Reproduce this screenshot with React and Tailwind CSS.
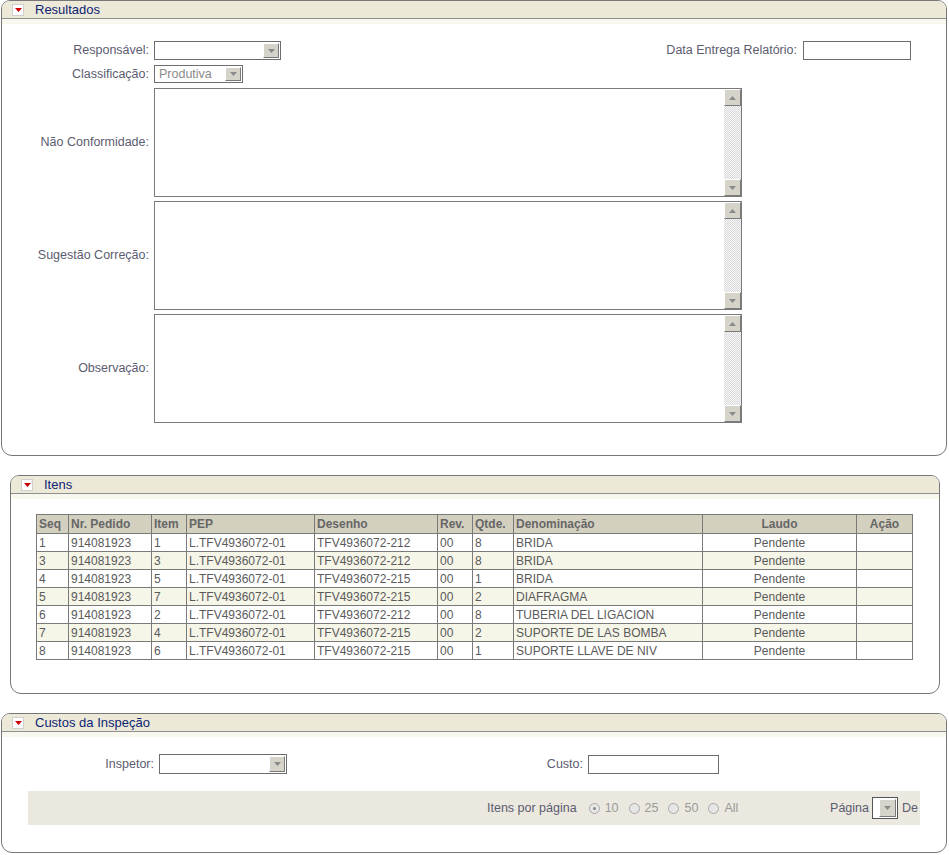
const FONT = "font-['Liberation_Sans',Arial,sans-serif]";

function Arrow({ up }) {
  return (
    <svg width="7" height="4" viewBox="0 0 7 4">
      <path d={up ? 'M0 4 L3.5 0 L7 4 Z' : 'M0 0 L7 0 L3.5 4 Z'} fill="#8a8a8a" />
    </svg>
  );
}

function RaisedButton({ up, className = '' }) {
  return (
    <div
      className={`flex items-center justify-center bg-[#d6d3ca] border border-t-white border-l-white border-r-[#7a7a7a] border-b-[#7a7a7a] ${className}`}
    >
      <Arrow up={up} />
    </div>
  );
}

function Toggle() {
  return (
    <div className="w-[12px] h-[12px] bg-white border border-[#d0d0d0] flex items-center justify-center">
      <svg width="7" height="4" viewBox="0 0 7 4">
        <path d="M0 0 L7 0 L3.5 4 Z" fill="#cc0000" />
      </svg>
    </div>
  );
}

function Panel({ title, className = '', children }) {
  return (
    <div className={`border border-[#777] rounded-t-[9px] rounded-b-[11px] overflow-hidden bg-white ${className}`}>
      <div className="h-[18px] bg-[#ece9d8] border-b border-[#8f8f8f] flex items-center">
        <div className="pl-[10px]">
          <Toggle />
        </div>
        <span className="ml-[11px] text-[13px] text-[#0c2472]">{title}</span>
      </div>
      <div className="h-[5px] bg-[#f8f8ee]" />
      {children}
    </div>
  );
}

function Select({ w, h = 'h-[19px]', value }) {
  return (
    <div className={`${w} ${h} flex border border-[#6d6d6d] bg-white`}>
      <div className="flex-1 pl-[4px] text-[12.5px] text-[#8a8a8a] leading-[16px] overflow-hidden whitespace-nowrap">
        {value}
      </div>
      <RaisedButton className="w-[16px] m-px" />
    </div>
  );
}

function Input({ w }) {
  return <div className={`${w} h-[19px] border border-[#6d6d6d] bg-white`} />;
}

function TextArea() {
  return (
    <div className="w-[588px] h-[109px] border border-[#7a7a7a] bg-white flex">
      <div className="flex-1" />
      <div className="w-[17px] flex flex-col">
        <RaisedButton up className="h-[17px]" />
        <div className="flex-1 bg-[repeating-conic-gradient(#d9d9d9_0_25%,#f8f8f8_0_50%)] bg-[length:2px_2px]" />
        <RaisedButton className="h-[17px]" />
      </div>
    </div>
  );
}

const label = 'text-[12.5px] leading-[15px] text-[#5c5c70] whitespace-nowrap';

const cols = [
  { name: 'Seq', w: 'w-[32px]' },
  { name: 'Nr. Pedido', w: 'w-[83px]' },
  { name: 'Item', w: 'w-[35px]' },
  { name: 'PEP', w: 'w-[128px]' },
  { name: 'Desenho', w: 'w-[123px]' },
  { name: 'Rev.', w: 'w-[35px]' },
  { name: 'Qtde.', w: 'w-[41px]' },
  { name: 'Denominação', w: 'w-[189px]' },
  { name: 'Laudo', w: 'w-[154px]', center: true },
  { name: 'Ação', w: 'w-[56px]', center: true },
];

const rows = [
  ['1', '914081923', '1', 'L.TFV4936072-01', 'TFV4936072-212', '00', '8', 'BRIDA', 'Pendente', ''],
  ['3', '914081923', '3', 'L.TFV4936072-01', 'TFV4936072-212', '00', '8', 'BRIDA', 'Pendente', ''],
  ['4', '914081923', '5', 'L.TFV4936072-01', 'TFV4936072-215', '00', '1', 'BRIDA', 'Pendente', ''],
  ['5', '914081923', '7', 'L.TFV4936072-01', 'TFV4936072-215', '00', '2', 'DIAFRAGMA', 'Pendente', ''],
  ['6', '914081923', '2', 'L.TFV4936072-01', 'TFV4936072-212', '00', '8', 'TUBERIA DEL LIGACION', 'Pendente', ''],
  ['7', '914081923', '4', 'L.TFV4936072-01', 'TFV4936072-215', '00', '2', 'SUPORTE DE LAS BOMBA', 'Pendente', ''],
  ['8', '914081923', '6', 'L.TFV4936072-01', 'TFV4936072-215', '00', '1', 'SUPORTE LLAVE DE NIV', 'Pendente', ''],
];

function Radio({ checked, text, className = '' }) {
  return (
    <div className={`flex items-center ${className}`}>
      <div className="w-[11px] h-[11px] rounded-full border border-[#a8a8a8] bg-[#e6e6e6] flex items-center justify-center">
        {checked && <div className="w-[3px] h-[3px] rounded-full bg-[#8a8a8a]" />}
      </div>
      <span className="ml-[5px] text-[12.5px] text-[#9a9a9a]">{text}</span>
    </div>
  );
}

export default function App() {
  return (
    <div className={`${FONT} w-[949px] bg-white pb-px`}>
      <Panel title="Resultados" className="ml-[1px] w-[946px]">
        <div className="pt-[17px] pb-[32px] pr-[35px]">
          <div className="flex items-center justify-between h-[19px]">
            <div className="flex items-center">
              <div className={`${label} w-[147px] text-right`}>Responsável:</div>
              <div className="ml-[5px]">
                <Select w="w-[127px]" value="" />
              </div>
            </div>
            <div className="flex items-center">
              <div className={label}>Data Entrega Relatório:</div>
              <div className="ml-[6px]">
                <Input w="w-[108px]" />
              </div>
            </div>
          </div>
          <div className="flex items-center mt-[5px]">
            <div className={`${label} w-[147px] text-right`}>Classificação:</div>
            <div className="ml-[5px]">
              <Select w="w-[89px]" h="h-[18px]" value="Produtiva" />
            </div>
          </div>
          {['Não Conformidade:', 'Sugestão Correção:', 'Observação:'].map((t, i) => (
            <div key={t} className={`flex items-center ${i === 0 ? 'mt-[5px]' : 'mt-[4px]'}`}>
              <div className={`${label} w-[147px] text-right`}>{t}</div>
              <div className="ml-[5px]">
                <TextArea />
              </div>
            </div>
          ))}
        </div>
      </Panel>

      <Panel title="Itens" className="ml-[10px] mt-[19px] w-[930px]">
        <div className="pt-[15px] pb-[33px] pl-[25px]">
          <table className="border-collapse w-[876px] table-fixed text-[12px]">
            <thead>
              <tr className="h-[19px] bg-[#d4d0c0]">
                {cols.map((c) => (
                  <th
                    key={c.name}
                    className={`${c.w} border border-[#7a7a7a] px-[2px] font-bold text-[#666] ${c.center ? 'text-center' : 'text-left'}`}
                  >
                    {c.name}
                  </th>
                ))}
              </tr>
            </thead>
            <tbody>
              {rows.map((r, i) => (
                <tr key={i} className={`h-[18px] ${i % 2 ? 'bg-[#f5f5e8]' : 'bg-white'}`}>
                  {r.map((v, j) => (
                    <td
                      key={j}
                      className={`border border-[#7a7a7a] px-[2px] text-[#5a5a5a] whitespace-nowrap overflow-hidden leading-[16px] ${cols[j].center ? 'text-center' : ''}`}
                    >
                      {v}
                    </td>
                  ))}
                </tr>
              ))}
            </tbody>
          </table>
        </div>
      </Panel>

      <Panel title="Custos da Inspeção" className="ml-[1px] mt-[19px] w-[946px]">
        <div className="pt-[17px] pb-[27px]">
          <div className="flex items-center">
            <div className={`${label} w-[152px] text-right`}>Inspetor:</div>
            <div className="ml-[5px]">
              <Select w="w-[128px]" h="h-[20px]" value="" />
            </div>
            <div className={`${label} w-[296px] text-right`}>Custo:</div>
            <div className="ml-[5px]">
              <Input w="w-[131px]" />
            </div>
          </div>
          <div className="ml-[26px] mt-[17px] w-[892px] h-[34px] bg-[#ebe8df] flex items-center pl-[459px] pr-[2px]">
            <span className="text-[12.5px] text-[#5c5c70]">Itens por página</span>
            <Radio checked text="10" className="ml-[12px]" />
            <Radio text="25" className="ml-[10px]" />
            <Radio text="50" className="ml-[10px]" />
            <Radio text="All" className="ml-[10px]" />
            <div className="ml-auto flex items-center">
              <span className="text-[12.5px] text-[#5c5c70]">Página</span>
              <div className="ml-[3px] w-[26px] h-[22px] border border-[#555] bg-white flex">
                <div className="w-[5px]" />
                <RaisedButton className="flex-1 m-px" />
              </div>
              <span className="ml-[4px] text-[12.5px] text-[#5c5c70]">De</span>
            </div>
          </div>
        </div>
      </Panel>
    </div>
  );
}
